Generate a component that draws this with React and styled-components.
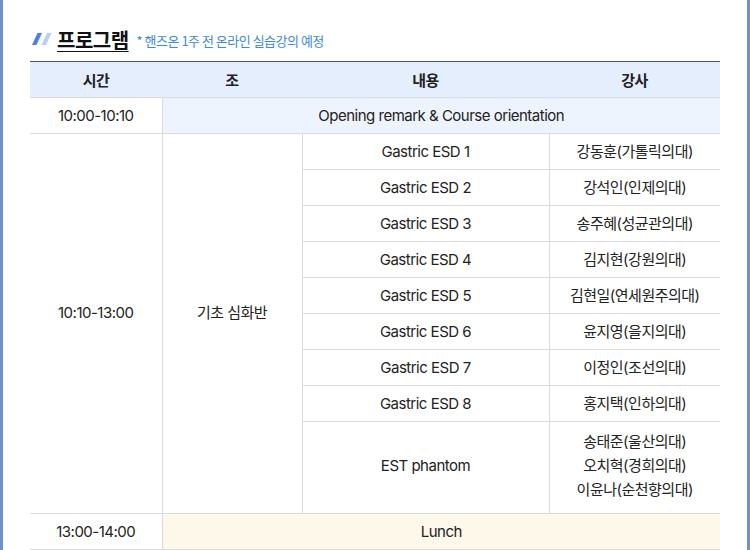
import React from "react";
import styled, { createGlobalStyle } from "styled-components";

const Global = createGlobalStyle`
  html, body { margin: 0; padding: 0; background: #fff; }
  body { font-family: Inter, "Noto Sans CJK KR", sans-serif; color: #222; }
`;

const Frame = styled.div`
  width: 750px;
  height: 550px;
  box-sizing: border-box;
  border-left: 3px solid #7090d0;
  border-right: 3px solid #7090d0;
  overflow: hidden;
  padding: 26px 27px 0 27px;
`;

const TitleBar = styled.div`
  display: flex;
  align-items: center;
  height: 26px;
  margin-bottom: 9px;
  padding-left: 2px;
`;

const Title = styled.h2`
  margin: 0 8px 0 5px;
  font-family: "Noto Sans CJK KR", sans-serif;
  font-size: 20px;
  font-weight: 700;
  color: #111;
  text-decoration: underline;
  text-underline-offset: 3px;
  text-decoration-thickness: 1px;
  letter-spacing: -0.5px;
`;

const Note = styled.span`
  font-family: "Noto Sans CJK KR", sans-serif;
  font-size: 13px;
  color: #3d8ad6;
  letter-spacing: -0.5px;
  margin-top: 3px;
`;

const Table = styled.table`
  width: 690px;
  border-collapse: collapse;
  table-layout: fixed;
  border-top: 1px solid #555;
  font-size: 15px;
  letter-spacing: -0.5px;
`;

const Th = styled.th`
  height: 35px;
  background: #e4eefc;
  font-weight: 600;
  font-family: "Noto Sans CJK KR", sans-serif;
  font-size: 15px;
  color: #222;
  border-bottom: 1px solid #dcdcdc;
  padding: 0;
`;

const Td = styled.td`
  height: ${(p) => p.$h || 35}px;
  text-align: center;
  padding: 0 0 ${(p) => p.$pb || 0}px;
  border: 1px solid #dcdcdc;
  border-top: none;
  background: ${(p) => p.$bg || "#fff"};
  line-height: 24px;
  color: #222;
  &:first-child { border-left: none; }
  &:last-child { border-right: none; }
`;

const Slash = () => (
  <svg width="20" height="12" viewBox="0 0 20 12">
    <polygon points="5.5,0 10,0 4.5,12 0,12" fill="#4f80e2" />
    <polygon points="15,0 19.5,0 14,12 9.5,12" fill="#b9cff4" />
  </svg>
);

const lectures = [
  ["Gastric ESD 1", "강동훈(가톨릭의대)"],
  ["Gastric ESD 2", "강석인(인제의대)"],
  ["Gastric ESD 3", "송주혜(성균관의대)"],
  ["Gastric ESD 4", "김지현(강원의대)"],
  ["Gastric ESD 5", "김현일(연세원주의대)"],
  ["Gastric ESD 6", "윤지영(을지의대)"],
  ["Gastric ESD 7", "이정인(조선의대)"],
  ["Gastric ESD 8", "홍지택(인하의대)"],
];

export default function App() {
  return (
    <>
      <Global />
      <Frame>
        <TitleBar>
          <Slash />
          <Title>프로그램</Title>
          <Note>* 핸즈온 1주 전 온라인 실습강의 예정</Note>
        </TitleBar>
        <Table>
          <colgroup>
            <col style={{ width: 132 }} />
            <col style={{ width: 140 }} />
            <col style={{ width: 247 }} />
            <col style={{ width: 171 }} />
          </colgroup>
          <thead>
            <tr>
              <Th>시간</Th>
              <Th>조</Th>
              <Th>내용</Th>
              <Th>강사</Th>
            </tr>
          </thead>
          <tbody>
            <tr>
              <Td>10:00-10:10</Td>
              <Td colSpan={3} $bg="#eef4fd">Opening remark &amp; Course orientation</Td>
            </tr>
            {lectures.map(([c, t], i) => (
              <tr key={c}>
                {i === 0 && (
                  <>
                    <Td rowSpan={9} $pb={22}>10:10-13:00</Td>
                    <Td rowSpan={9} $pb={22}>기초 심화반</Td>
                  </>
                )}
                <Td>{c}</Td>
                <Td>{t}</Td>
              </tr>
            ))}
            <tr>
              <Td $h={87} $pb={4}>EST phantom</Td>
              <Td $h={87} $pb={4}>
                송태준(울산의대)
                <br />
                오치혁(경희의대)
                <br />
                이윤나(순천향의대)
              </Td>
            </tr>
            <tr>
              <Td>13:00-14:00</Td>
              <Td colSpan={3} $bg="#fdf8ea">Lunch</Td>
            </tr>
          </tbody>
        </Table>
      </Frame>
    </>
  );
}
